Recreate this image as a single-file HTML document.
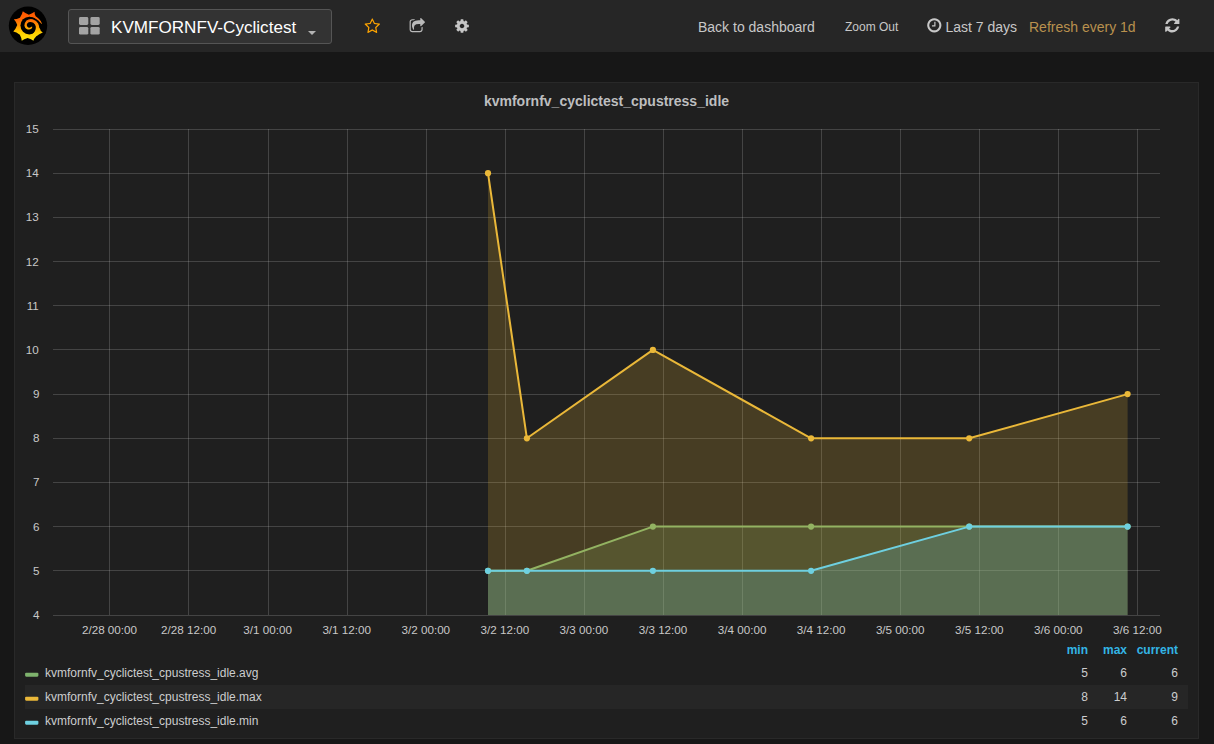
<!DOCTYPE html>
<html lang="en">
<head>
<meta charset="utf-8">
<title>Grafana - KVMFORNFV-Cyclictest</title>
<style>
*{box-sizing:border-box;margin:0;padding:0}
html,body{width:1214px;height:744px;overflow:hidden}
body{background:#171717;color:#d8d9da;font-family:"Liberation Sans",sans-serif;font-size:13px;position:relative}
.navbar{position:absolute;left:0;top:0;width:1214px;height:52px;background:#262626}
.logo{position:absolute;left:9px;top:7px;width:38px;height:38px}
.title-btn{position:absolute;left:68px;top:9px;width:264px;height:35px;background:#333333;border:1px solid #555555;border-radius:3px}
.title-btn .txt{position:absolute;left:42px;top:6.6px;font-size:17.1px;line-height:22px;color:#ffffff;white-space:nowrap}
.title-btn svg.th{position:absolute;left:10px;top:7px}
.title-btn .caret{position:absolute;left:239px;top:20.5px;width:0;height:0;border-left:4px solid transparent;border-right:4px solid transparent;border-top:4px solid #b3b3b3}
.nav-ico{position:absolute}
.nav-txt{position:absolute;white-space:nowrap;line-height:20px;color:#c8c8c8}
.panel{position:absolute;left:14px;top:82px;width:1185px;height:657px;background:#1f1f1f;border:1px solid #292929}
.panel-title{position:absolute;left:-0.5px;top:92px;width:1214px;text-align:center;font-weight:bold;font-size:14px;line-height:18px;color:#bdbebf}
.chart{position:absolute;left:0;top:0}
.legend{position:absolute;left:25px;top:638px;width:1163px}
.lrow{position:absolute;left:0;width:1163px;height:24px}
.lrow.alt{background:#262626}
.lrow .sw{position:absolute;left:0;top:8px}
.lrow .nm{position:absolute;left:20px;top:4px;font-size:12px;line-height:16px;color:#cccdce;white-space:nowrap}
.lrow .v{position:absolute;top:4px;font-size:12px;line-height:16px;text-align:right;color:#cccdce}
.lhead .v{color:#33b5e5;font-weight:bold}
.c1{right:100px}.c2{right:61px}.c3{right:10px}
</style>
</head>
<body>
<div class="navbar">
  <svg class="logo" style="left:10px;top:8px;width:36px;height:36px;overflow:visible" viewBox="0 0 744 744">
    <defs><linearGradient id="lg" gradientUnits="userSpaceOnUse" x1="0" y1="60" x2="0" y2="690"><stop offset="0" stop-color="#ff5200"/><stop offset="0.3" stop-color="#ff6a03"/><stop offset="0.55" stop-color="#ffa400"/><stop offset="0.72" stop-color="#ffd000"/><stop offset="1" stop-color="#ffe510"/></linearGradient></defs>
    <circle cx="372" cy="368" r="397" fill="#000"/>
    <path fill="url(#lg)" d="M660 322 Q642 268 600 228 Q565 196 530 172 Q504 122 508 80 Q464 113 390 138 Q307 110 264 68 Q255 127 205 200 Q136 234 80 234 Q121 276 150 352 Q115 441 68 486 Q130 497 203 552 Q241 621 243 676 Q286 640 364 618 Q444 643 484 676 Q494 633 543 583 Q618 529 678 508 Q638 487 614 432 Q602 400 596 360 Z"/>
    <circle cx="399" cy="364" r="183" fill="#000"/>
    <path fill="#000" d="M400 181 Q500 184 584 256 Q628 300 656 334 L604 412 L500 300 Z"/>
    <path fill="url(#lg)" d="M604 412 Q602 360 582 318 Q550 258 470 232 Q400 214 340 260 Q292 315 297 368 Q306 420 352 438 Q410 455 448 422 Q460 405 462 390 L440 388 Q420 412 390 410 Q352 398 345 352 Q348 312 385 294 Q432 280 482 304 Q526 335 534 385 Q538 432 514 482 Q497 512 462 540 L560 570 L630 450 Z"/>
  </svg>
  <div class="title-btn">
    <svg class="th" width="21" height="18" viewBox="0 0 21 18"><g fill="#a3a3a3"><rect x="0" y="0" width="9.3" height="8" rx="1.4"/><rect x="11.4" y="0" width="9.3" height="8" rx="1.4"/><rect x="0" y="9.9" width="9.3" height="7.7" rx="1.4"/><rect x="11.4" y="9.9" width="9.3" height="7.7" rx="1.4"/></g></svg>
    <span class="txt">KVMFORNFV-Cyclictest</span>
    <span class="caret"></span>
  </div>
  <svg class="nav-ico i-star" style="left:364.0px;top:18.3px" width="16.6" height="16.6" viewBox="0 0 1792 1792"><path fill="#ffa500" d="M1201 1004l306-297-422-62-189-382-189 382-422 62 306 297-73 421 378-199 377 199zm527-357q0 22-26 48l-363 354 86 500q1 7 1 20 0 50-41 50-19 0-40-12l-449-236-449 236q-22 12-40 12-21 0-31.500-14.500t-10.500-35.500q0-6 2-20l86-500-364-354q-25-27-25-48 0-37 56-46l502-73 225-455q19-41 49-41t49 41l225 455 502 73q56 9 56 46z"/></svg>
  <svg class="nav-ico i-share" style="left:409.2px;top:17.9px" width="16.6" height="16.6" viewBox="0 0 1792 1792"><path fill="#b9b9b9" d="M1472 989v259q0 119-84.500 203.500t-203.500 84.500h-832q-119 0-203.500-84.500t-84.500-203.500v-832q0-119 84.500-203.500t203.500-84.500h255q13 0 22.500 9.500t9.500 22.500q0 27-26 32-77 26-133 60-10 4-16 4h-112q-66 0-113 47t-47 113v832q0 66 47 113t113 47h832q66 0 113-47t47-113v-214q0-19 18-29 28-13 54-37 16-16 35-8 21 9 21 29zm237-496l-384 384q-18 19-45 19-12 0-25-5-39-17-39-59v-192h-160q-323 0-438 131-119 137-74 473 3 23-20 34-8 2-12 2-16 0-26-13-10-14-21-31t-39.500-68.500-49.500-99.500-38.500-114-17.500-122q0-49 3.500-91t14-90 28-88 47-81.500 68.500-74 94.500-61.500 124.500-48.500 159.500-30.500 196.500-11h160v-192q0-42 39-59 13-5 25-5 26 0 45 19l384 384q19 19 19 45t-19 45z"/></svg>
  <svg class="nav-ico i-cog" style="left:454.2px;top:18.2px" width="16" height="16" viewBox="0 0 1792 1792"><path fill="#c6c6c6" d="M1152 896q0-106-75-181t-181-75-181 75-75 181 75 181 181 75 181-75 75-181zm512-109v222q0 12-8 23t-20 13l-185 28q-19 54-39 91 35 50 107 138 10 12 10 25t-9 23q-27 37-99 108t-94 71q-12 0-26-9l-138-108q-44 23-91 38-16 136-29 186-7 28-36 28h-222q-14 0-24.500-8.500t-11.500-21.500l-28-184q-49-16-90-37l-141 107q-10 9-25 9-14 0-25-11-126-114-165-168-7-10-7-23 0-12 8-23 15-21 51-66.500t54-70.500q-27-50-41-99l-183-27q-13-2-21-12.500t-8-23.500v-222q0-12 8-23t19-13l186-28q14-46 39-92-40-57-107-138-10-12-10-24 0-10 9-23 26-36 98.500-107.500t94.500-71.500q13 0 26 10l138 107q44-23 91-38 16-136 29-186 7-28 36-28h222q14 0 24.500 8.500t11.500 21.500l28 184q49 16 90 37l142-107q9-9 24-9 13 0 25 10 129 119 165 170 7 8 7 22 0 12-8 23-15 21-51 66.500t-54 70.500q26 50 41 98l183 28q13 2 21 12.500t8 23.500z"/></svg>
  <svg class="nav-ico i-clock" style="left:925.9px;top:17.1px" width="16.6" height="16.6" viewBox="0 0 1792 1792"><path fill="#c8c8c8" d="M1024 544v448q0 14-9 23t-23 9h-320q-14 0-23-9t-9-23v-64q0-14 9-23t23-9h224v-352q0-14 9-23t23-9h64q14 0 23 9t9 23zm416 352q0-148-73-273t-198-198-273-73-273 73-198 198-73 273 73 273 198 198 273 73 273-73 198-198 73-273zm224 0q0 209-103 385.500t-279.500 279.500-385.500 103-385.500-103-279.500-279.500-103-385.500 103-385.500 279.500-279.500 385.500-103 385.500 103 279.500 279.500 103 385.500z"/></svg>
  <svg class="nav-ico i-refresh" style="left:1163.9px;top:17.4px" width="16.6" height="16.6" viewBox="0 0 1792 1792"><path fill="#c6c6c6" d="M1639 1056q0 5-1 7-64 268-268 434.500t-478 166.500q-146 0-282.500-55t-243.500-157l-129 129q-19 19-45 19t-45-19-19-45v-448q0-26 19-45t45-19h448q26 0 45 19t19 45-19 45l-137 137q71 66 161 102t187 36q134 0 250-65t186-179q11-17 53-117 8-23 30-23h192q13 0 22.500 9.500t9.500 22.500zm25-800v448q0 26-19 45t-45 19h-448q-26 0-45-19t-19-45 19-45l138-138q-148-137-349-137-134 0-250 65t-186 179q-11 17-53 117-8 23-30 23h-199q-13 0-22.500-9.500t-9.500-22.500v-7q65-268 270-434.500t480-166.500q146 0 284 55.500t245 156.500l130-129q19-19 45-19t45 19 19 45z"/></svg>
  <span class="nav-txt" style="left:698px;top:17px;font-size:14px">Back to dashboard</span>
  <span class="nav-txt" style="left:845px;top:17px;font-size:12px">Zoom Out</span>
  <span class="nav-txt" style="left:945.5px;top:17px;font-size:14px">Last 7 days</span>
  <span class="nav-txt" style="left:1029px;top:17px;font-size:14px;color:#b9914e">Refresh every 1d</span>
</div>
<div class="panel"></div>
<div class="panel-title">kvmfornfv_cyclictest_cpustress_idle</div>
<svg class="chart" width="1214" height="744" viewBox="0 0 1214 744">
<g shape-rendering="crispEdges" stroke="rgba(200,200,200,0.22)" stroke-width="1">
<line x1="109.5" y1="129" x2="109.5" y2="615"/>
<line x1="188.5" y1="129" x2="188.5" y2="615"/>
<line x1="268.5" y1="129" x2="268.5" y2="615"/>
<line x1="347.5" y1="129" x2="347.5" y2="615"/>
<line x1="426.5" y1="129" x2="426.5" y2="615"/>
<line x1="505.5" y1="129" x2="505.5" y2="615"/>
<line x1="584.5" y1="129" x2="584.5" y2="615"/>
<line x1="663.5" y1="129" x2="663.5" y2="615"/>
<line x1="742.5" y1="129" x2="742.5" y2="615"/>
<line x1="821.5" y1="129" x2="821.5" y2="615"/>
<line x1="900.5" y1="129" x2="900.5" y2="615"/>
<line x1="979.5" y1="129" x2="979.5" y2="615"/>
<line x1="1058.5" y1="129" x2="1058.5" y2="615"/>
<line x1="1137.5" y1="129" x2="1137.5" y2="615"/>
<line x1="53" y1="615.5" x2="1160" y2="615.5"/>
<line x1="53" y1="570.5" x2="1160" y2="570.5"/>
<line x1="53" y1="526.5" x2="1160" y2="526.5"/>
<line x1="53" y1="482.5" x2="1160" y2="482.5"/>
<line x1="53" y1="438.5" x2="1160" y2="438.5"/>
<line x1="53" y1="394.5" x2="1160" y2="394.5"/>
<line x1="53" y1="349.5" x2="1160" y2="349.5"/>
<line x1="53" y1="305.5" x2="1160" y2="305.5"/>
<line x1="53" y1="261.5" x2="1160" y2="261.5"/>
<line x1="53" y1="217.5" x2="1160" y2="217.5"/>
<line x1="53" y1="173.5" x2="1160" y2="173.5"/>
<line x1="53" y1="129.5" x2="1160" y2="129.5"/>
</g>
<polygon points="488.0,615 488.0,570.8 526.9,570.8 652.9,526.6 811.1,526.6 969.2,526.6 1127.6,526.6 1127.6,615" fill="#7EB26D" fill-opacity="0.2"/>
<polyline points="488.0,570.8 526.9,570.8 652.9,526.6 811.1,526.6 969.2,526.6 1127.6,526.6" fill="none" stroke="#7EB26D" stroke-width="2" stroke-linejoin="round"/>
<circle cx="488.0" cy="570.8" r="3.1" fill="#7EB26D"/>
<circle cx="526.9" cy="570.8" r="3.1" fill="#7EB26D"/>
<circle cx="652.9" cy="526.6" r="3.1" fill="#7EB26D"/>
<circle cx="811.1" cy="526.6" r="3.1" fill="#7EB26D"/>
<circle cx="969.2" cy="526.6" r="3.1" fill="#7EB26D"/>
<circle cx="1127.6" cy="526.6" r="3.1" fill="#7EB26D"/>
<polygon points="488.0,615 488.0,173.2 526.9,438.3 652.9,349.9 811.1,438.3 969.2,438.3 1127.6,394.1 1127.6,615" fill="#EAB839" fill-opacity="0.2"/>
<polyline points="488.0,173.2 526.9,438.3 652.9,349.9 811.1,438.3 969.2,438.3 1127.6,394.1" fill="none" stroke="#EAB839" stroke-width="2" stroke-linejoin="round"/>
<circle cx="488.0" cy="173.2" r="3.1" fill="#EAB839"/>
<circle cx="526.9" cy="438.3" r="3.1" fill="#EAB839"/>
<circle cx="652.9" cy="349.9" r="3.1" fill="#EAB839"/>
<circle cx="811.1" cy="438.3" r="3.1" fill="#EAB839"/>
<circle cx="969.2" cy="438.3" r="3.1" fill="#EAB839"/>
<circle cx="1127.6" cy="394.1" r="3.1" fill="#EAB839"/>
<polygon points="488.0,615 488.0,570.8 526.9,570.8 652.9,570.8 811.1,570.8 969.2,526.6 1127.6,526.6 1127.6,615" fill="#6ED0E0" fill-opacity="0.2"/>
<polyline points="488.0,570.8 526.9,570.8 652.9,570.8 811.1,570.8 969.2,526.6 1127.6,526.6" fill="none" stroke="#6ED0E0" stroke-width="2" stroke-linejoin="round"/>
<circle cx="488.0" cy="570.8" r="3.1" fill="#6ED0E0"/>
<circle cx="526.9" cy="570.8" r="3.1" fill="#6ED0E0"/>
<circle cx="652.9" cy="570.8" r="3.1" fill="#6ED0E0"/>
<circle cx="811.1" cy="570.8" r="3.1" fill="#6ED0E0"/>
<circle cx="969.2" cy="526.6" r="3.1" fill="#6ED0E0"/>
<circle cx="1127.6" cy="526.6" r="3.1" fill="#6ED0E0"/>
<g class="tick" fill="#c8c8c8" font-size="11.67" font-family="Liberation Sans, sans-serif">
<text x="39.6" y="619" text-anchor="end">4</text>
<text x="39.6" y="575" text-anchor="end">5</text>
<text x="39.6" y="531" text-anchor="end">6</text>
<text x="39.6" y="486" text-anchor="end">7</text>
<text x="39.6" y="442" text-anchor="end">8</text>
<text x="39.6" y="398" text-anchor="end">9</text>
<text x="38.8" y="354" text-anchor="end">10</text>
<text x="38.8" y="310" text-anchor="end">11</text>
<text x="38.8" y="266" text-anchor="end">12</text>
<text x="38.8" y="221" text-anchor="end">13</text>
<text x="38.8" y="177" text-anchor="end">14</text>
<text x="38.8" y="133" text-anchor="end">15</text>
<text x="109.5" y="634" text-anchor="middle">2/28 00:00</text>
<text x="188.6" y="634" text-anchor="middle">2/28 12:00</text>
<text x="267.6" y="634" text-anchor="middle">3/1 00:00</text>
<text x="346.7" y="634" text-anchor="middle">3/1 12:00</text>
<text x="425.8" y="634" text-anchor="middle">3/2 00:00</text>
<text x="504.9" y="634" text-anchor="middle">3/2 12:00</text>
<text x="583.9" y="634" text-anchor="middle">3/3 00:00</text>
<text x="663.0" y="634" text-anchor="middle">3/3 12:00</text>
<text x="742.1" y="634" text-anchor="middle">3/4 00:00</text>
<text x="821.1" y="634" text-anchor="middle">3/4 12:00</text>
<text x="900.2" y="634" text-anchor="middle">3/5 00:00</text>
<text x="979.3" y="634" text-anchor="middle">3/5 12:00</text>
<text x="1058.3" y="634" text-anchor="middle">3/6 00:00</text>
<text x="1137.4" y="634" text-anchor="middle">3/6 12:00</text>
</g>
</svg>
<div class="legend">
  <div class="lrow lhead" style="top:0"><span class="v c1">min</span><span class="v c2">max</span><span class="v c3">current</span></div>
  <div class="lrow" style="top:23px"><svg class="sw" width="16" height="10" viewBox="0 0 16 10"><rect x="0.1" y="3.75" width="13.3" height="3.9" rx="1.1" fill="#7EB26D"/></svg><span class="nm">kvmfornfv_cyclictest_cpustress_idle.avg</span><span class="v c1">5</span><span class="v c2">6</span><span class="v c3">6</span></div>
  <div class="lrow alt" style="top:47px"><svg class="sw" width="16" height="10" viewBox="0 0 16 10"><rect x="0.1" y="3.75" width="13.3" height="3.9" rx="1.1" fill="#EAB839"/></svg><span class="nm">kvmfornfv_cyclictest_cpustress_idle.max</span><span class="v c1">8</span><span class="v c2">14</span><span class="v c3">9</span></div>
  <div class="lrow" style="top:71px"><svg class="sw" width="16" height="10" viewBox="0 0 16 10"><rect x="0.1" y="3.75" width="13.3" height="3.9" rx="1.1" fill="#6ED0E0"/></svg><span class="nm">kvmfornfv_cyclictest_cpustress_idle.min</span><span class="v c1">5</span><span class="v c2">6</span><span class="v c3">6</span></div>
</div>
</body>
</html>
